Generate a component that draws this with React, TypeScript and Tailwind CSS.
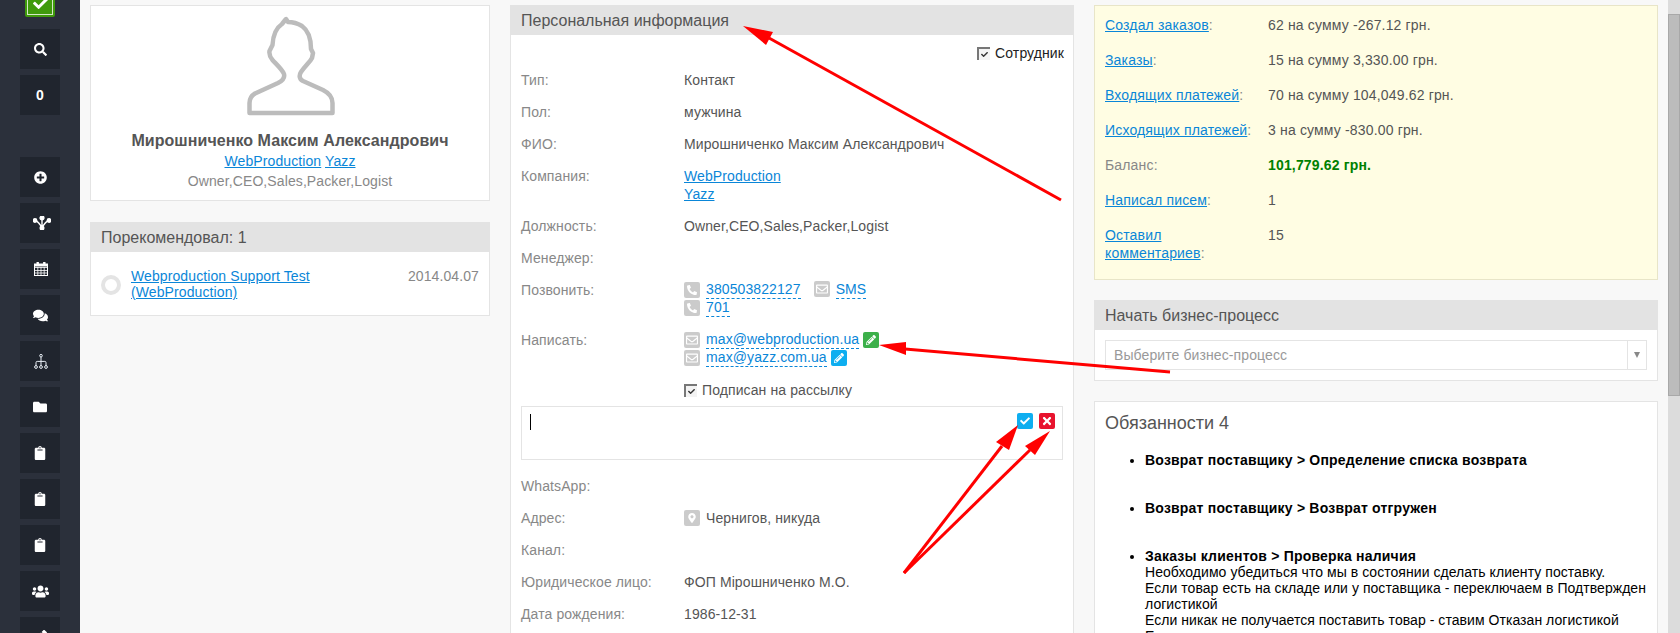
import type { ReactNode } from "react";
import {
  FaSearch,
  FaPlusCircle,
  FaComments,
  FaFolder,
  FaClipboard,
  FaUsers,
  FaPhoneAlt,
  FaRegEnvelope,
  FaMapMarkerAlt,
  FaPencilAlt,
  FaCheck,
  FaTimes,
  FaPen,
} from "react-icons/fa";

const link = "text-[#0a86d8] underline";
const dashed = "text-[#0a86d8] border-b border-dashed border-[#0a86d8] leading-[17px] inline-block";

function SideBtn({ children, className = "" }: { children?: ReactNode; className?: string }) {
  return (
    <div className={`flex h-10 w-10 shrink-0 items-center justify-center bg-[#20252e] text-white ${className}`}>
      {children}
    </div>
  );
}

function BranchIcon() {
  return (
    <svg viewBox="0 0 18 14" className="ml-[3px] h-[14px] w-[18px]" fill="none" stroke="white" strokeWidth="1.4">
      <path d="M9 2v10M2 4.5C4 5 7 8 9 12M16 4.5C14 5 11 8 9 12" />
      <circle cx="9" cy="2" r="1.9" fill="white" />
      <circle cx="2" cy="4.5" r="1.7" fill="white" />
      <circle cx="16" cy="4.5" r="1.7" fill="white" />
      <circle cx="9" cy="12" r="1.8" fill="white" />
    </svg>
  );
}

function CalendarIcon() {
  return (
    <svg viewBox="0 0 14 14" className="ml-[1px] h-[14px] w-[14px]" fill="none" stroke="white" strokeWidth="1">
      <rect x="0.5" y="2" width="13" height="11.5" />
      <path d="M0.5 5.5h13M0.5 8.5h13M0.5 11h13M3.8 5v8M7 5v8M10.2 5v8" strokeWidth="0.8" />
      <rect x="2.5" y="0" width="2.4" height="4" fill="white" stroke="none" />
      <rect x="9.1" y="0" width="2.4" height="4" fill="white" stroke="none" />
      <rect x="0.5" y="2" width="13" height="2.5" fill="white" stroke="none" />
    </svg>
  );
}

function TreeIcon() {
  return (
    <svg viewBox="0 0 14 15" className="ml-[1px] h-[15px] w-[14px]" fill="none" stroke="#e8eef5" strokeWidth="1">
      <circle cx="7" cy="1.7" r="1.3" />
      <path d="M7 3v9M2 12V8.6q0-1.2 1.2-1.2h7.6q1.2 0 1.2 1.2V12" />
      <circle cx="2" cy="13" r="1.4" />
      <circle cx="7" cy="13" r="1.4" />
      <circle cx="12" cy="13" r="1.4" />
    </svg>
  );
}

function Sidebar() {
  return (
    <nav className="flex h-[633px] w-20 shrink-0 flex-col items-center overflow-hidden bg-[#2b303b]">
      <div className="-mt-[13px] flex h-[30px] w-[30px] shrink-0 items-center justify-center rounded-[2px] border-2 border-[#3f9a0c] bg-[#3f9a0c] shadow-[inset_0_0_0_1px_#d5e8c8]">
        <FaCheck className="mt-[3px] text-[15px] text-white" />
      </div>
      <div className="mt-3 flex flex-col gap-[6px]">
        <SideBtn>
          <FaSearch className="text-[13px]" />
        </SideBtn>
        <SideBtn>
          <span className="text-[14px] font-bold">0</span>
        </SideBtn>
        <SideBtn className="mt-9">
          <FaPlusCircle className="text-[13px]" />
        </SideBtn>
        <SideBtn>
          <BranchIcon />
        </SideBtn>
        <SideBtn>
          <CalendarIcon />
        </SideBtn>
        <SideBtn>
          <FaComments className="text-[15px]" />
        </SideBtn>
        <SideBtn>
          <TreeIcon />
        </SideBtn>
        <SideBtn>
          <FaFolder className="text-[14px]" />
        </SideBtn>
        <SideBtn>
          <FaClipboard className="text-[14px]" />
        </SideBtn>
        <SideBtn>
          <FaClipboard className="text-[14px]" />
        </SideBtn>
        <SideBtn>
          <FaClipboard className="text-[14px]" />
        </SideBtn>
        <SideBtn>
          <FaUsers className="ml-[1px] text-[17px]" />
        </SideBtn>
        <SideBtn>
          <FaPen className="text-[14px]" />
        </SideBtn>
      </div>
    </nav>
  );
}

function Avatar() {
  return (
    <svg viewBox="0 0 91 101" className="mx-auto h-[101px] w-[91px]" fill="none" stroke="#bcbcbc" strokeWidth="4.5" strokeLinejoin="round">
      <path d="M41 3L37 8C31 12 28 20 27.5 29L24.5 35C24 38 25 41 27.5 44C30 47 37 53 39 58C40 62 37 65 33 67L10 77.5C6 80 4.5 83 4.5 87V97H87.5V87C87.5 81 84 77 78 74L58 65C54 63 54 59 56 56C60 50 65 46 67 42L68 37L66 33C66 24 64 15 57 10C52 7 47 6 43 6Z" />
    </svg>
  );
}

function CardHeader({ children }: { children: ReactNode }) {
  return <div className="h-[30px] bg-[#e3e3e3] pl-[11px] text-[16px] leading-[31px] tracking-normal text-[#555]">{children}</div>;
}

function Square({ children, color = "bg-[#cbcbcb]" }: { children: ReactNode; color?: string }) {
  return (
    <span className={`inline-flex h-4 w-4 shrink-0 items-center justify-center rounded-[2px] text-white ${color}`}>
      {children}
    </span>
  );
}

function Check() {
  return (
    <span className="flex h-[13px] w-[13px] shrink-0 items-center justify-center border-t-2 border-l-2 border-[#777] bg-[#f3f3f3]">
      <FaCheck className="text-[7px] text-[#333]" />
    </span>
  );
}

function Row({ label, children }: { label: string; children?: ReactNode }) {
  return (
    <div className="flex py-[7px] leading-[18px]">
      <div className="w-[163px] shrink-0 text-[#888]">{label}</div>
      <div className="text-[#555]">{children}</div>
    </div>
  );
}

function StatRow({ label, children, isLink = true }: { label: string; children: ReactNode; isLink?: boolean }) {
  return (
    <div className="flex leading-[18px]">
      <div className="w-[163px] shrink-0 pr-[10px] text-[#888]">
        {isLink ? <a className={link}>{label}</a> : label}:
      </div>
      <div className="text-[#555]">{children}</div>
    </div>
  );
}

function Arrows() {
  return (
    <svg className="pointer-events-none absolute top-0 left-0 h-[633px] w-[1680px]" viewBox="0 0 1680 633" fill="#ff0000" stroke="none">
      <path d="M769 38 1061 200" stroke="#ff0000" strokeWidth="3" />
      <polygon points="743,26 773,32 766,45" />
      <path d="M905 349 1170 372" stroke="#ff0000" strokeWidth="3" />
      <polygon points="879,345 906,342 906,355" />
      <path d="M1002 446 904 573" stroke="#ff0000" strokeWidth="3" />
      <polygon points="1018,425 996,442 1009,450" />
      <path d="M1030 450 904 573" stroke="#ff0000" strokeWidth="3" />
      <polygon points="1050,431 1025,446 1035,455" />
    </svg>
  );
}

export default function App() {
  return (
    <div className="relative flex h-[633px] w-[1680px] overflow-hidden bg-[#f8f8f8] font-['Liberation_Sans',Arial,sans-serif] text-[14px] tracking-[0.1px]">
      <Sidebar />

      <main className="flex min-w-0 flex-1 items-start pt-[5px] pl-[10px]">
        {/* левая колонка */}
        <div className="w-[400px] shrink-0">
          <section className="h-[196px] border border-[#e4e4e4] bg-white pt-[10px] text-center">
            <Avatar />
            <div className="mt-[15px] text-[16px] leading-[18px] font-bold tracking-[0.06px] text-[#555]">
              Мирошниченко Максим Александрович
            </div>
            <div className="mt-[2px] leading-[18px]">
              <a className={link}>WebProduction</a> <a className={link}>Yazz</a>
            </div>
            <div className="mt-[2px] leading-[18px] text-[#888]">Owner,CEO,Sales,Packer,Logist</div>
          </section>

          <section className="mt-[21px]">
            <CardHeader>Порекомендовал: 1</CardHeader>
            <div className="flex h-[64px] items-start border border-t-0 border-[#e4e4e4] bg-white pt-4 pr-[10px] pl-[10px]">
              <span className="mt-[7px] h-5 w-5 shrink-0 rounded-full border-[4px] border-[#e4e4e4]" />
              <a className={`ml-[10px] leading-4 ${link}`}>
                Webproduction Support Test
                <br />
                (WebProduction)
              </a>
              <span className="ml-auto leading-4 text-[#888]">2014.04.07</span>
            </div>
          </section>
        </div>

        {/* персональная информация */}
        <section className="ml-5 h-[640px] w-[564px] shrink-0">
          <CardHeader>Персональная информация</CardHeader>
          <div className="h-[610px] border-x border-[#e4e4e4] bg-white pt-[9px] pl-[10px]">
            <div className="mb-[2px] flex items-center justify-end gap-[5px] pr-[9px] leading-[18px] text-[#222]">
              <Check />
              Сотрудник
            </div>
            <Row label="Тип:">Контакт</Row>
            <Row label="Пол:">мужчина</Row>
            <Row label="ФИО:">Мирошниченко Максим Александрович</Row>
            <Row label="Компания:">
              <a className={`block ${link}`}>WebProduction</a>
              <a className={`block ${link}`}>Yazz</a>
            </Row>
            <Row label="Должность:">Owner,CEO,Sales,Packer,Logist</Row>
            <Row label="Менеджер:" />
            <Row label="Позвонить:">
              <div className="flex h-[18px] items-center">
                <Square>
                  <FaPhoneAlt className="text-[10px]" />
                </Square>
                <a className={`ml-[6px] ${dashed}`}>380503822127</a>
                <span className="ml-[13px]">
                  <Square>
                    <FaRegEnvelope className="text-[12px]" />
                  </Square>
                </span>
                <a className={`ml-[6px] ${dashed}`}>SMS</a>
              </div>
              <div className="flex h-[18px] items-center">
                <Square>
                  <FaPhoneAlt className="text-[10px]" />
                </Square>
                <a className={`ml-[6px] ${dashed}`}>701</a>
              </div>
            </Row>
            <Row label="Написать:">
              <div className="flex h-[18px] items-center">
                <Square>
                  <FaRegEnvelope className="text-[12px]" />
                </Square>
                <a className={`ml-[6px] ${dashed}`}>max@webproduction.ua</a>
                <span className="ml-1 flex">
                  <Square color="bg-[#3cb04a]">
                    <FaPencilAlt className="text-[10px]" />
                  </Square>
                </span>
              </div>
              <div className="flex h-[18px] items-center">
                <Square>
                  <FaRegEnvelope className="text-[12px]" />
                </Square>
                <a className={`ml-[6px] ${dashed}`}>max@yazz.com.ua</a>
                <span className="ml-1 flex">
                  <Square color="bg-[#0eaef0]">
                    <FaPencilAlt className="text-[10px]" />
                  </Square>
                </span>
              </div>
            </Row>
            <div className="flex items-center gap-[5px] py-[7px] pl-[163px] leading-[18px] text-[#555]">
              <Check />
              Подписан на рассылку
            </div>
            <div className="flex h-[54px] w-[542px] items-start justify-between border border-[#e4e4e4] pt-[6px] pr-[7px] pl-[8px]">
              <span className="mt-[1px] h-4 w-px bg-black" />
              <div className="flex gap-[6px]">
                <Square color="bg-[#0eaef0]">
                  <FaCheck className="text-[10px]" />
                </Square>
                <Square color="bg-[#e8132e]">
                  <FaTimes className="text-[12px]" />
                </Square>
              </div>
            </div>
            <div className="mt-[10px]">
              <Row label="WhatsApp:" />
              <Row label="Адрес:">
                <div className="flex h-[18px] items-center gap-[6px]">
                  <Square>
                    <FaMapMarkerAlt className="text-[10px]" />
                  </Square>
                  Чернигов, никуда
                </div>
              </Row>
              <Row label="Канал:" />
              <Row label="Юридическое лицо:">ФОП Мірошниченко М.О.</Row>
              <Row label="Дата рождения:">1986-12-31</Row>
            </div>
          </div>
        </section>

        {/* правая колонка */}
        <div className="ml-5 w-[564px] shrink-0">
          <section className="flex h-[275px] flex-col gap-[17px] border border-[#e8e5c8] bg-[#fffde3] pt-[10px] pl-[10px] tracking-[0.16px]">
            <StatRow label="Создал заказов">62 на сумму -267.12 грн.</StatRow>
            <StatRow label="Заказы">15 на сумму 3,330.00 грн.</StatRow>
            <StatRow label="Входящих платежей">70 на сумму 104,049.62 грн.</StatRow>
            <StatRow label="Исходящих платежей">3 на сумму -830.00 грн.</StatRow>
            <StatRow label="Баланс" isLink={false}>
              <b className="text-[#008000]">101,779.62 грн.</b>
            </StatRow>
            <StatRow label="Написал писем">1</StatRow>
            <StatRow label="Оставил комментариев">15</StatRow>
          </section>

          <section className="mt-5">
            <CardHeader>Начать бизнес-процесс</CardHeader>
            <div className="border border-t-0 border-[#e4e4e4] bg-white px-[10px] pt-[10px] pb-[10px]">
              <div className="flex h-[30px] border border-[#e4e4e4] leading-[28px] text-[#999]">
                <span className="flex-1 pl-2">Выберите бизнес-процесс</span>
                <span className="flex w-[19px] items-center justify-center border-l border-[#e4e4e4]">
                  <span className="h-0 w-0 border-x-[3px] border-t-[6px] border-x-transparent border-t-[#888]" />
                </span>
              </div>
            </div>
          </section>

          <section className="mt-5 h-[300px] border border-[#e4e4e4] bg-white pt-[10px] pr-[5px] pl-[10px]">
            <h2 className="text-[18px] leading-[22px] tracking-normal text-[#555]">Обязанности 4</h2>
            <ul className="mt-[18px] list-disc pl-10 leading-4 tracking-[0.05px] text-black">
              <li className="mb-8">
                <b className="tracking-[0.2px]">Возврат поставщику &gt; Определение списка возврата</b>
              </li>
              <li className="mb-8">
                <b className="tracking-[0.2px]">Возврат поставщику &gt; Возврат отгружен</b>
              </li>
              <li>
                <b className="tracking-[0.2px]">Заказы клиентов &gt; Проверка наличия</b>
                <br />
                Необходимо убедиться что мы в состоянии сделать клиенту поставку.
                <br />
                Если товар есть на складе или у поставщика - переключаем в Подтвержден логистикой
                <br />
                Если никак не получается поставить товар - ставим Отказан логистикой
                <br />
                Если
              </li>
            </ul>
          </section>
        </div>
      </main>

      {/* скроллбар */}
      <div className="h-[633px] w-3 shrink-0 bg-[#dcdcdc] pt-[14px]">
        <div className="h-[382px] border border-[#a8a8a8] bg-[#bcbcbc]" />
      </div>

      <Arrows />
    </div>
  );
}
